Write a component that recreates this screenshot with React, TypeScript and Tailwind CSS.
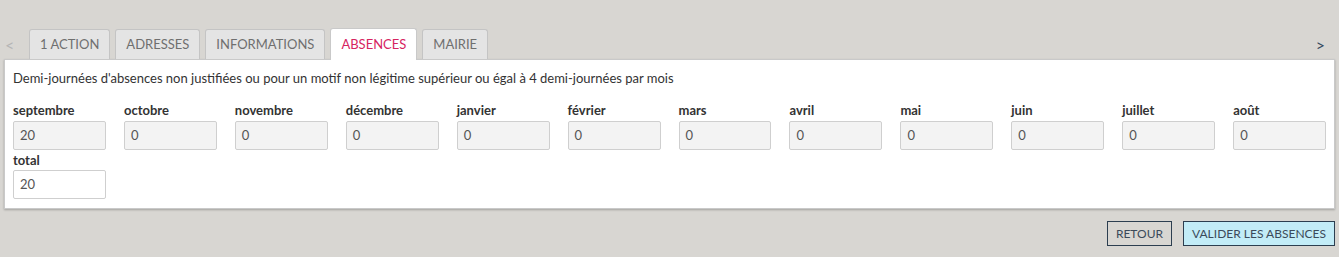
import React from "react";

const months = [
  ["septembre", "20"],
  ["octobre", "0"],
  ["novembre", "0"],
  ["décembre", "0"],
  ["janvier", "0"],
  ["février", "0"],
  ["mars", "0"],
  ["avril", "0"],
  ["mai", "0"],
  ["juin", "0"],
  ["juillet", "0"],
  ["août", "0"],
];

const tabs = ["1 ACTION", "ADRESSES", "INFORMATIONS", "ABSENCES", "MAIRIE"];

export default function App() {
  return (
    <div
      className="w-[1339px] h-[257px] bg-[#d8d6d2] text-[#333] overflow-hidden"
      style={{ fontFamily: "Lato, 'Open Sans', sans-serif" }}
    >
      <div className="pt-[28px] px-[4px]">
        <div className="flex items-end h-[31px]">
          <span className="w-[25px] text-[#b5b5b5] text-[16px] leading-none pb-[6px] pl-[1px]">&lt;</span>
          <div className="flex gap-[5px] items-end">
            {tabs.map((t) => {
              const active = t === "ABSENCES";
              return (
                <div
                  key={t}
                  className={
                    active
                      ? "h-[32px] px-[10px] flex items-center bg-white border border-b-0 border-[#c9c9c9] rounded-t-[3px] text-[13px] text-[#d6245f] relative z-10 -mb-px"
                      : "h-[30px] px-[10px] flex items-center bg-[#e4e4e4] border border-b-0 border-[#c4c4c4] rounded-t-[3px] text-[13px] text-[#6f6f6f]"
                  }
                >
                  {t}
                </div>
              );
            })}
          </div>
          <span className="ml-auto text-[#34495e] text-[16px] leading-none pb-[6px] pr-[10px]">&gt;</span>
        </div>
        <div className="bg-white border border-[#c9c9c9] shadow-[0_1px_2px_rgba(0,0,0,0.25)] px-[8px] pt-[9px] pb-[8px] h-[150px]">
          <p className="text-[13px] leading-[18px] text-[#333]">
            Demi-journées d'absences non justifiées ou pour un motif non légitime supérieur ou égal à 4 demi-journées par mois
          </p>
          <div className="flex gap-[18px] mt-[14px]">
            {months.map(([m, v]) => (
              <div key={m} className="w-[93px] flex flex-col">
                <label className="text-[13px] font-bold leading-[18px] text-[#333]">{m}</label>
                <div className="mt-[2px] h-[29px] border border-[#cfcfcf] bg-[#f3f3f3] rounded-[2px] flex items-center px-[6px] text-[13px] text-[#555]">
                  {v}
                </div>
              </div>
            ))}
          </div>
          <div className="w-[93px] flex flex-col mt-[1px]">
            <label className="text-[13px] font-bold leading-[18px] text-[#333]">total</label>
            <div className="mt-[1px] h-[29px] border border-[#cfcfcf] bg-white rounded-[2px] flex items-center px-[6px] text-[13px] text-[#555]">
              20
            </div>
          </div>
        </div>
        <div className="flex justify-end gap-[11px] mt-[12px]">
          <button className="h-[25px] px-[8px] border border-[#2c3e50] bg-transparent text-[12px] text-[#3b4a5a]">
            RETOUR
          </button>
          <button className="h-[25px] px-[8px] border border-[#2c3e50] bg-[#c2ecf7] text-[12px] text-[#3b4a5a]">
            VALIDER LES ABSENCES
          </button>
        </div>
      </div>
    </div>
  );
}
